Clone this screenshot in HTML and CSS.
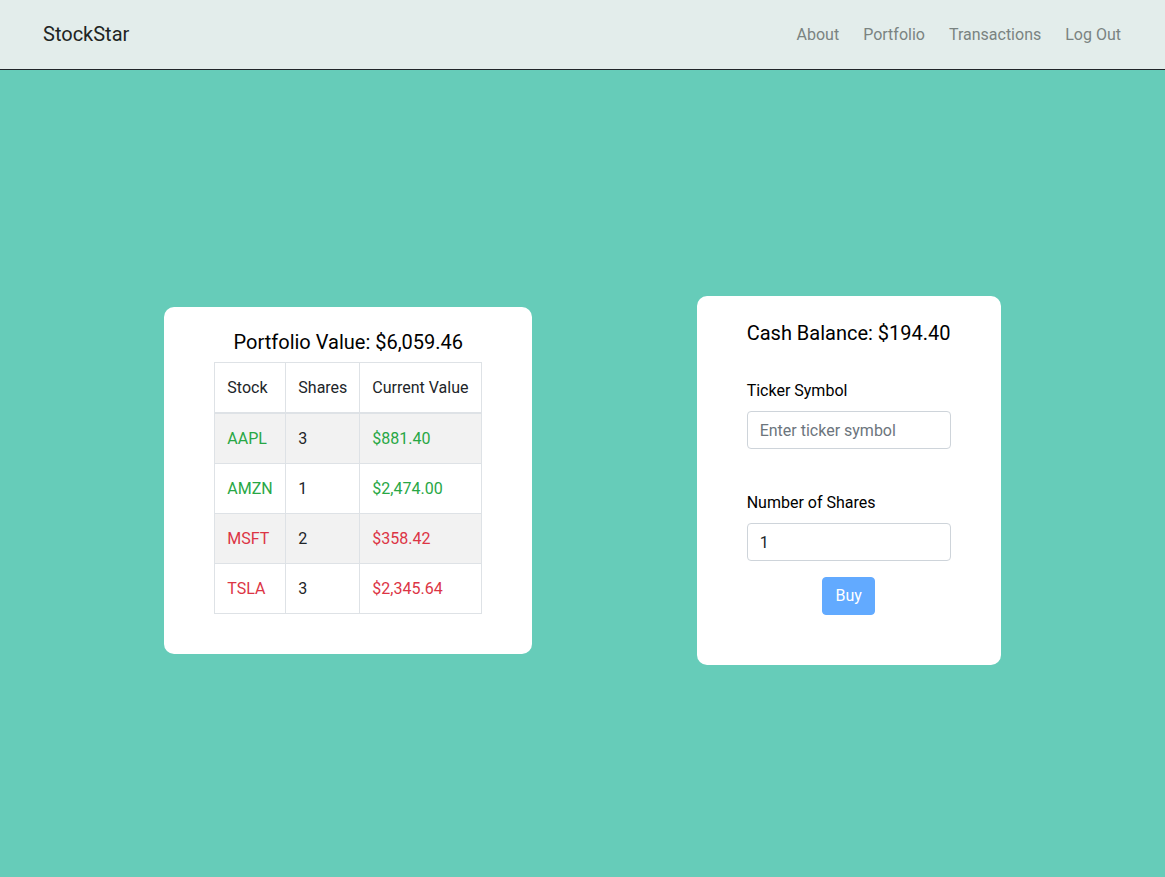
FILE: index.html
```html
<!DOCTYPE html>
<html lang="en">
<head>
<meta charset="utf-8">
<title>StockStar</title>
<link rel="stylesheet" href="styles.css">
</head>
<body>
<nav class="navbar">
  <a class="brand" href="#">StockStar</a>
  <ul class="nav-links">
    <li><a href="#">About</a></li>
    <li><a href="#">Portfolio</a></li>
    <li><a href="#">Transactions</a></li>
    <li><a href="#">Log Out</a></li>
  </ul>
</nav>
<main class="main">
  <section class="card portfolio-card">
    <h4 class="card-title center">Portfolio Value: $6,059.46</h4>
    <table class="stock-table">
      <colgroup>
        <col class="col-stock">
        <col class="col-shares">
        <col class="col-value">
      </colgroup>
      <thead>
        <tr><th>Stock</th><th>Shares</th><th>Current Value</th></tr>
      </thead>
      <tbody>
        <tr class="striped"><td class="up">AAPL</td><td>3</td><td class="up">$881.40</td></tr>
        <tr><td class="up">AMZN</td><td>1</td><td class="up">$2,474.00</td></tr>
        <tr class="striped"><td class="down">MSFT</td><td>2</td><td class="down">$358.42</td></tr>
        <tr><td class="down">TSLA</td><td>3</td><td class="down">$2,345.64</td></tr>
      </tbody>
    </table>
  </section>
  <section class="card buy-card">
    <h4 class="card-title">Cash Balance: $194.40</h4>
    <form class="buy-form">
      <label class="form-label" for="ticker">Ticker Symbol</label>
      <input class="form-input" id="ticker" type="text" placeholder="Enter ticker symbol">
      <label class="form-label second" for="shares">Number of Shares</label>
      <input class="form-input" id="shares" type="text" value="1">
      <button class="buy-btn" type="button">Buy</button>
    </form>
  </section>
</main>
</body>
</html>
```

FILE: styles.css
```css
* { box-sizing: border-box; }

html, body {
  margin: 0;
  padding: 0;
}

body {
  font-family: Roboto, "Liberation Sans", Arial, sans-serif;
  font-size: 16px;
  line-height: 1.5;
  color: #212529;
  background: #66ccb9;
}

.navbar {
  height: 70px;
  background: #e3edeb;
  border-bottom: 1px solid #212529;
  display: flex;
  align-items: center;
  justify-content: space-between;
  padding: 0 44px 0 43px;
}

.brand {
  font-size: 20px;
  line-height: 30px;
  color: #1f2523;
  text-decoration: none;
  margin-top: -1px;
}

.nav-links {
  list-style: none;
  margin: 0;
  padding: 0;
  display: flex;
  gap: 24px;
}

.nav-links a {
  color: #7a8381;
  text-decoration: none;
  font-size: 16px;
  line-height: 24px;
}

.main {
  height: 807px;
  padding-top: 14px;
  display: flex;
  justify-content: space-evenly;
  align-items: center;
}

.card {
  background: #fff;
  border-radius: 10px;
}

.portfolio-card {
  width: 368px;
  padding: 23px 50px 40px;
}

.buy-card {
  width: 304px;
  padding: 25px 50px 50px;
}

.card-title {
  margin: 0;
  font-size: 20px;
  font-weight: 400;
  line-height: 24px;
  color: #000;
}

.center { text-align: center; }

.stock-table {
  margin-top: 8px;
  width: 267px;
  table-layout: fixed;
  border-collapse: collapse;
}

.col-stock { width: 71px; }
.col-shares { width: 74px; }
.col-value { width: 122px; }

.stock-table th,
.stock-table td {
  border: 1px solid #dee2e6;
  padding: 12px;
  line-height: 25px;
  font-weight: 400;
  text-align: left;
  white-space: nowrap;
  color: #212529;
}

.stock-table thead th {
  border-bottom: 2px solid #dee2e6;
}

.stock-table tr.striped td {
  background: #f2f2f2;
}

.stock-table td.up { color: #28a745; }
.stock-table td.down { color: #dc3545; }

.buy-form {
  display: flex;
  flex-direction: column;
  margin-top: 34px;
}

.form-label {
  display: block;
  line-height: 24px;
  margin-bottom: 8px;
  color: #000;
}

.form-label.second {
  margin-top: 42px;
}

.form-input {
  display: block;
  width: 204px;
  height: 38px;
  padding: 6px 12px;
  font-family: inherit;
  font-size: 16px;
  line-height: 24px;
  color: #212529;
  background: #fff;
  border: 1px solid #ced4da;
  border-radius: 4px;
  outline: none;
}

.form-input::placeholder {
  color: #6c757d;
  opacity: 1;
}

.buy-btn {
  align-self: center;
  margin-top: 16px;
  height: 38px;
  padding: 6px 12px;
  font-family: inherit;
  font-size: 16px;
  line-height: 24px;
  color: #fff;
  background: #62aaff;
  border: 1px solid #62aaff;
  border-radius: 4px;
}
```
